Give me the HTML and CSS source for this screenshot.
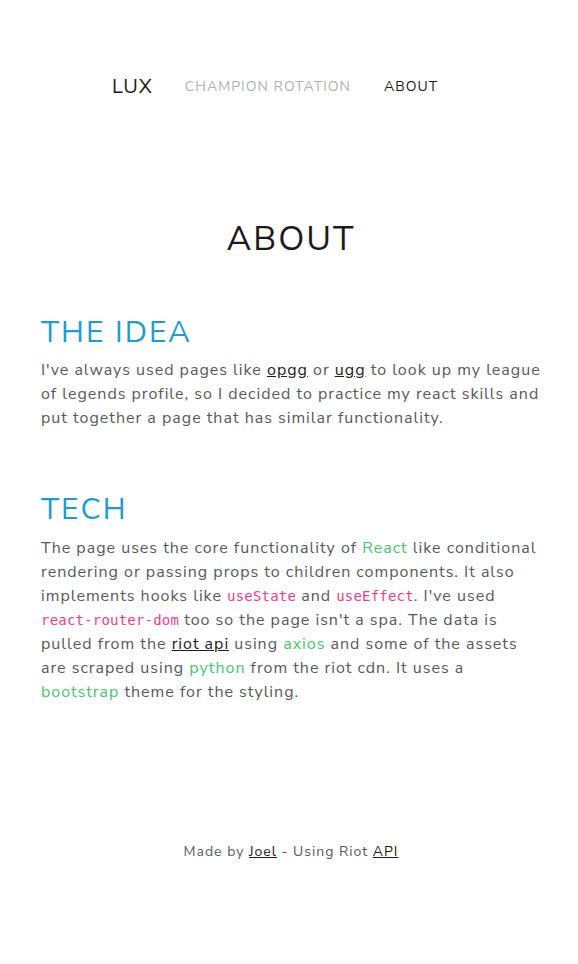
FILE: index.html
```html
<!DOCTYPE html>
<html>
<head>
<meta charset="utf-8">
<link rel="stylesheet" href="styles.css">
</head>
<body>
<nav class="nav">
  <a class="brand" href="#">LUX</a>
  <a class="nav-link muted" href="#">Champion Rotation</a>
  <a class="nav-link active" href="#">About</a>
</nav>
<main class="content">
  <h1 class="title">About</h1>
  <section class="section">
    <h2 class="sub">The Idea</h2>
    <p class="text">I've always used pages like <a class="ul" href="#">opgg</a> or <a class="ul" href="#">ugg</a> to look up my league of legends profile, so I decided to practice my react skills and put together a page that has similar functionality.</p>
  </section>
  <section class="section tech">
    <h2 class="sub">Tech</h2>
    <p class="text">The page uses the core functionality of <span class="green">React</span> like conditional rendering or passing props to children components. It also implements hooks like <code class="code">useState</code> and <code class="code">useEffect</code>. I've used <code class="code">react-router-dom</code> too so the page isn't a spa. The data is pulled from the <a class="ul" href="#">riot api</a> using <span class="green">axios</span> and some of the assets are scraped using <span class="green">python</span> from the riot cdn. It uses a <span class="green">bootstrap</span> theme for the styling.</p>
  </section>
</main>
<footer class="footer">Made by <a class="ul" href="#">Joel</a> - Using Riot <a class="ul" href="#">API</a></footer>
</body>
</html>
```
FILE: styles.css
```css
html, body {
  margin: 0;
  padding: 0;
  background: #fff;
}
body {
  font-family: "Nunito Sans", Lato, "Open Sans", sans-serif;
  color: #55595c;
  font-size: 16px;
  line-height: 24px;
  letter-spacing: 1px;
}
a { text-decoration: none; }
.nav {
  display: flex;
  align-items: center;
  padding: 73px 0 0 112px;
  height: 28px;
}
.brand {
  color: #1a1a1a;
  font-size: 20px;
  letter-spacing: 1px;
  margin-right: 32px;
}
.nav-link {
  text-transform: uppercase;
  font-size: 14px;
  letter-spacing: 1.05px;
  margin-right: 33px;
}
.muted { color: #b0b0b0; }
.active { color: #1a1a1a; }
.content {
  padding: 0 37px 0 41px;
}
.title {
  margin: 118px 0 0;
  text-align: center;
  text-transform: uppercase;
  font-weight: 400;
  font-size: 34px;
  line-height: 40px;
  letter-spacing: 2px;
  color: #1a1a1a;
}
.section { margin-top: 56px; }
.tech { margin-top: 62px; }
.sub {
  margin: 0 0 7px;
  text-transform: uppercase;
  font-weight: 400;
  font-size: 30px;
  line-height: 36px;
  letter-spacing: 2px;
  color: #1f9bcf;
}
.tech .sub { margin-bottom: 8px; }
.text { margin: 0; }
.ul {
  color: #1a1a1a;
  text-decoration: underline;
}
.green { color: #4bbf73; }
.code {
  font-family: "DejaVu Sans Mono", monospace;
  font-size: 14px;
  line-height: 1;
  letter-spacing: 0.2px;
  color: #e83e8c;
}
.footer {
  margin-top: 136px;
  padding-left: 4px;
  text-align: center;
  font-size: 14px;
  letter-spacing: 1px;
}
```
